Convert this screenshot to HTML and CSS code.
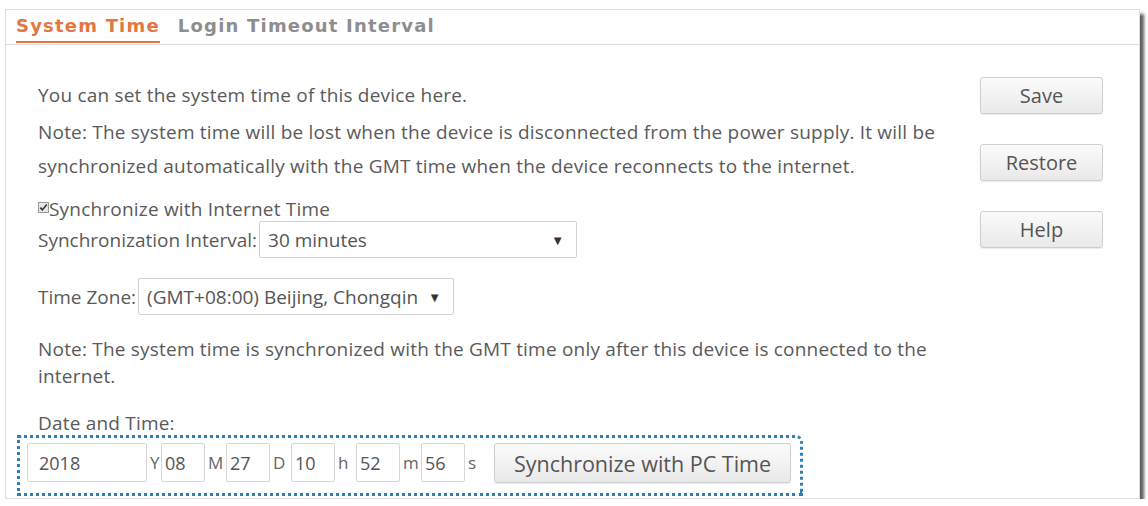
FILE: index.html
```html
<!DOCTYPE html>
<html lang="en">
<head>
<meta charset="utf-8">
<title>System Time</title>
<link rel="stylesheet" href="styles.css">
</head>
<body>
<div class="frame">
  <div class="tabs">
    <span class="tab active">System Time</span>
    <span class="tab">Login Timeout Interval</span>
  </div>
  <div class="panel">
    <div class="main">
      <p class="intro">You can set the system time of this device here.</p>
      <p class="note">Note: The system time will be lost when the device is disconnected from the power supply. It will be<br>synchronized automatically with the GMT time when the device reconnects to the internet.</p>
      <div class="check-row">
        <span class="checkbox"><svg width="11" height="11" viewBox="0 0 11 11"><rect x="0.5" y="0.5" width="10" height="10" fill="#e6e6e6" stroke="#9a9a9a"/><path d="M2.3 5.6 L4.4 7.9 L8.8 2.6" fill="none" stroke="#333" stroke-width="1.6"/></svg></span><span>Synchronize with Internet Time</span>
      </div>
      <div class="field-row sync">
        <span class="label">Synchronization Interval:</span>
        <div class="select select-interval"><span class="value">30 minutes</span><span class="arrow">▼</span></div>
      </div>
      <div class="field-row zone">
        <span class="label">Time Zone:</span>
        <div class="select select-zone"><span class="value">(GMT+08:00) Beijing, Chongqin</span><span class="arrow">▼</span></div>
      </div>
      <p class="note2">Note: The system time is synchronized with the GMT time only after this device is connected to the<br>internet.</p>
      <div class="date-label">Date and Time:</div>
      <div class="datetime">
        <span class="input year">2018</span><span class="unit unit-y">Y</span>
        <span class="input">08</span><span class="unit">M</span>
        <span class="input">27</span><span class="unit">D</span>
        <span class="input">10</span><span class="unit">h</span>
        <span class="input">52</span><span class="unit">m</span>
        <span class="input">56</span><span class="unit">s</span>
        <button class="btn sync-btn">Synchronize with PC Time</button>
      </div>
    </div>
    <div class="actions">
      <button class="btn action">Save</button>
      <button class="btn action">Restore</button>
      <button class="btn action">Help</button>
    </div>
  </div>
</div>
</body>
</html>
```
FILE: styles.css
```css
* { box-sizing: border-box; }
html, body { margin: 0; padding: 0; background: #fff; }
body {
  font-family: "Open Sans", "Noto Sans", sans-serif;
  font-size: 19px;
  letter-spacing: 0.2px;
  color: #5a5a5a;
}
.frame {
  margin: 9px 0 0 5px;
  width: 1135px;
  height: 490px;
  border: 1px solid #dcdcdc;
  box-shadow: 4px 5px 3px #5e5e5e;
  background: #fff;
}
.tabs {
  height: 35px;
  border-bottom: 1px solid #dedede;
  padding-left: 10px;
  display: flex;
  align-items: flex-end;
  gap: 18px;
  font-family: "DejaVu Sans", Verdana, sans-serif;
  font-weight: bold;
  font-size: 18px;
  letter-spacing: 1.2px;
}
.tab {
  color: #8e8e8e;
  line-height: 30px;
  border-bottom: 2px solid transparent;
  margin-bottom: 1px;
}
.tab.active {
  color: #e4773f;
  border-bottom-color: #e4773f;
}
.panel {
  display: flex;
}
.main {
  flex: 1;
  padding-left: 32px;
}
p { margin: 0; }
.intro {
  margin-top: 36px;
  line-height: 28px;
}
.note {
  margin-top: 6px;
  line-height: 34px;
  white-space: nowrap;
}
.check-row {
  margin-top: 14px;
  line-height: 24px;
  display: flex;
  align-items: center;
}
.checkbox {
  display: inline-flex;
  width: 11px;
  height: 11px;
  margin-top: -4px;
}
.field-row {
  display: flex;
  align-items: center;
}
.field-row.sync { margin-top: 0; }
.field-row.zone { margin-top: 20px; }
.label { margin-right: 2px; letter-spacing: 0; }
.select {
  height: 37px;
  border: 1px solid #d2d2d2;
  border-radius: 2px;
  background: #fff;
  display: flex;
  align-items: center;
  justify-content: space-between;
  padding: 0 12px 0 8px;
  font-size: 19px;
  letter-spacing: 0;
  color: #555;
}
.select-interval { width: 318px; }
.select-zone { width: 316px; }
.arrow { font-size: 13px; color: #333; }
.note2 {
  margin-top: 21px;
  line-height: 27px;
  white-space: nowrap;
}
.date-label {
  margin-top: 21px;
  line-height: 24px;
}
.datetime {
  margin-left: -21px;
  width: 786px;
  height: 61px;
  border: 3px dotted #2f7fb5;
  border-radius: 0 7px 0 0;
  padding: 5px 0 0 7px;
  display: flex;
  align-items: flex-start;
}
.input {
  display: inline-flex;
  align-items: center;
  width: 44px;
  height: 39px;
  border: 1px solid #d6d6d6;
  border-radius: 2px;
  padding-left: 3px;
  font-size: 18px;
  letter-spacing: 0;
  color: #555;
  background: #fff;
}
.input.year { width: 120px; padding-left: 11px; }
.unit {
  font-size: 17px;
  line-height: 39px;
  color: #666;
  margin-left: 3px;
  width: 18px;
}
.unit.unit-y { width: 11px; }
.btn {
  font-family: "Open Sans", "Noto Sans", sans-serif;
  color: #555;
  border: 1px solid #cfcfcf;
  border-radius: 3px;
  background: linear-gradient(#fbfbfb, #e9e9e9);
  box-shadow: 0 1px 1px rgba(0,0,0,0.08);
  padding: 0;
  cursor: pointer;
}
.sync-btn {
  margin-left: 8px;
  width: 297px;
  height: 40px;
  font-size: 21.5px;
}
.actions {
  width: 123px;
  margin-right: 36px;
  padding-top: 32px;
  display: flex;
  flex-direction: column;
  gap: 30px;
}
.action {
  height: 37px;
  font-size: 20px;
}
```
